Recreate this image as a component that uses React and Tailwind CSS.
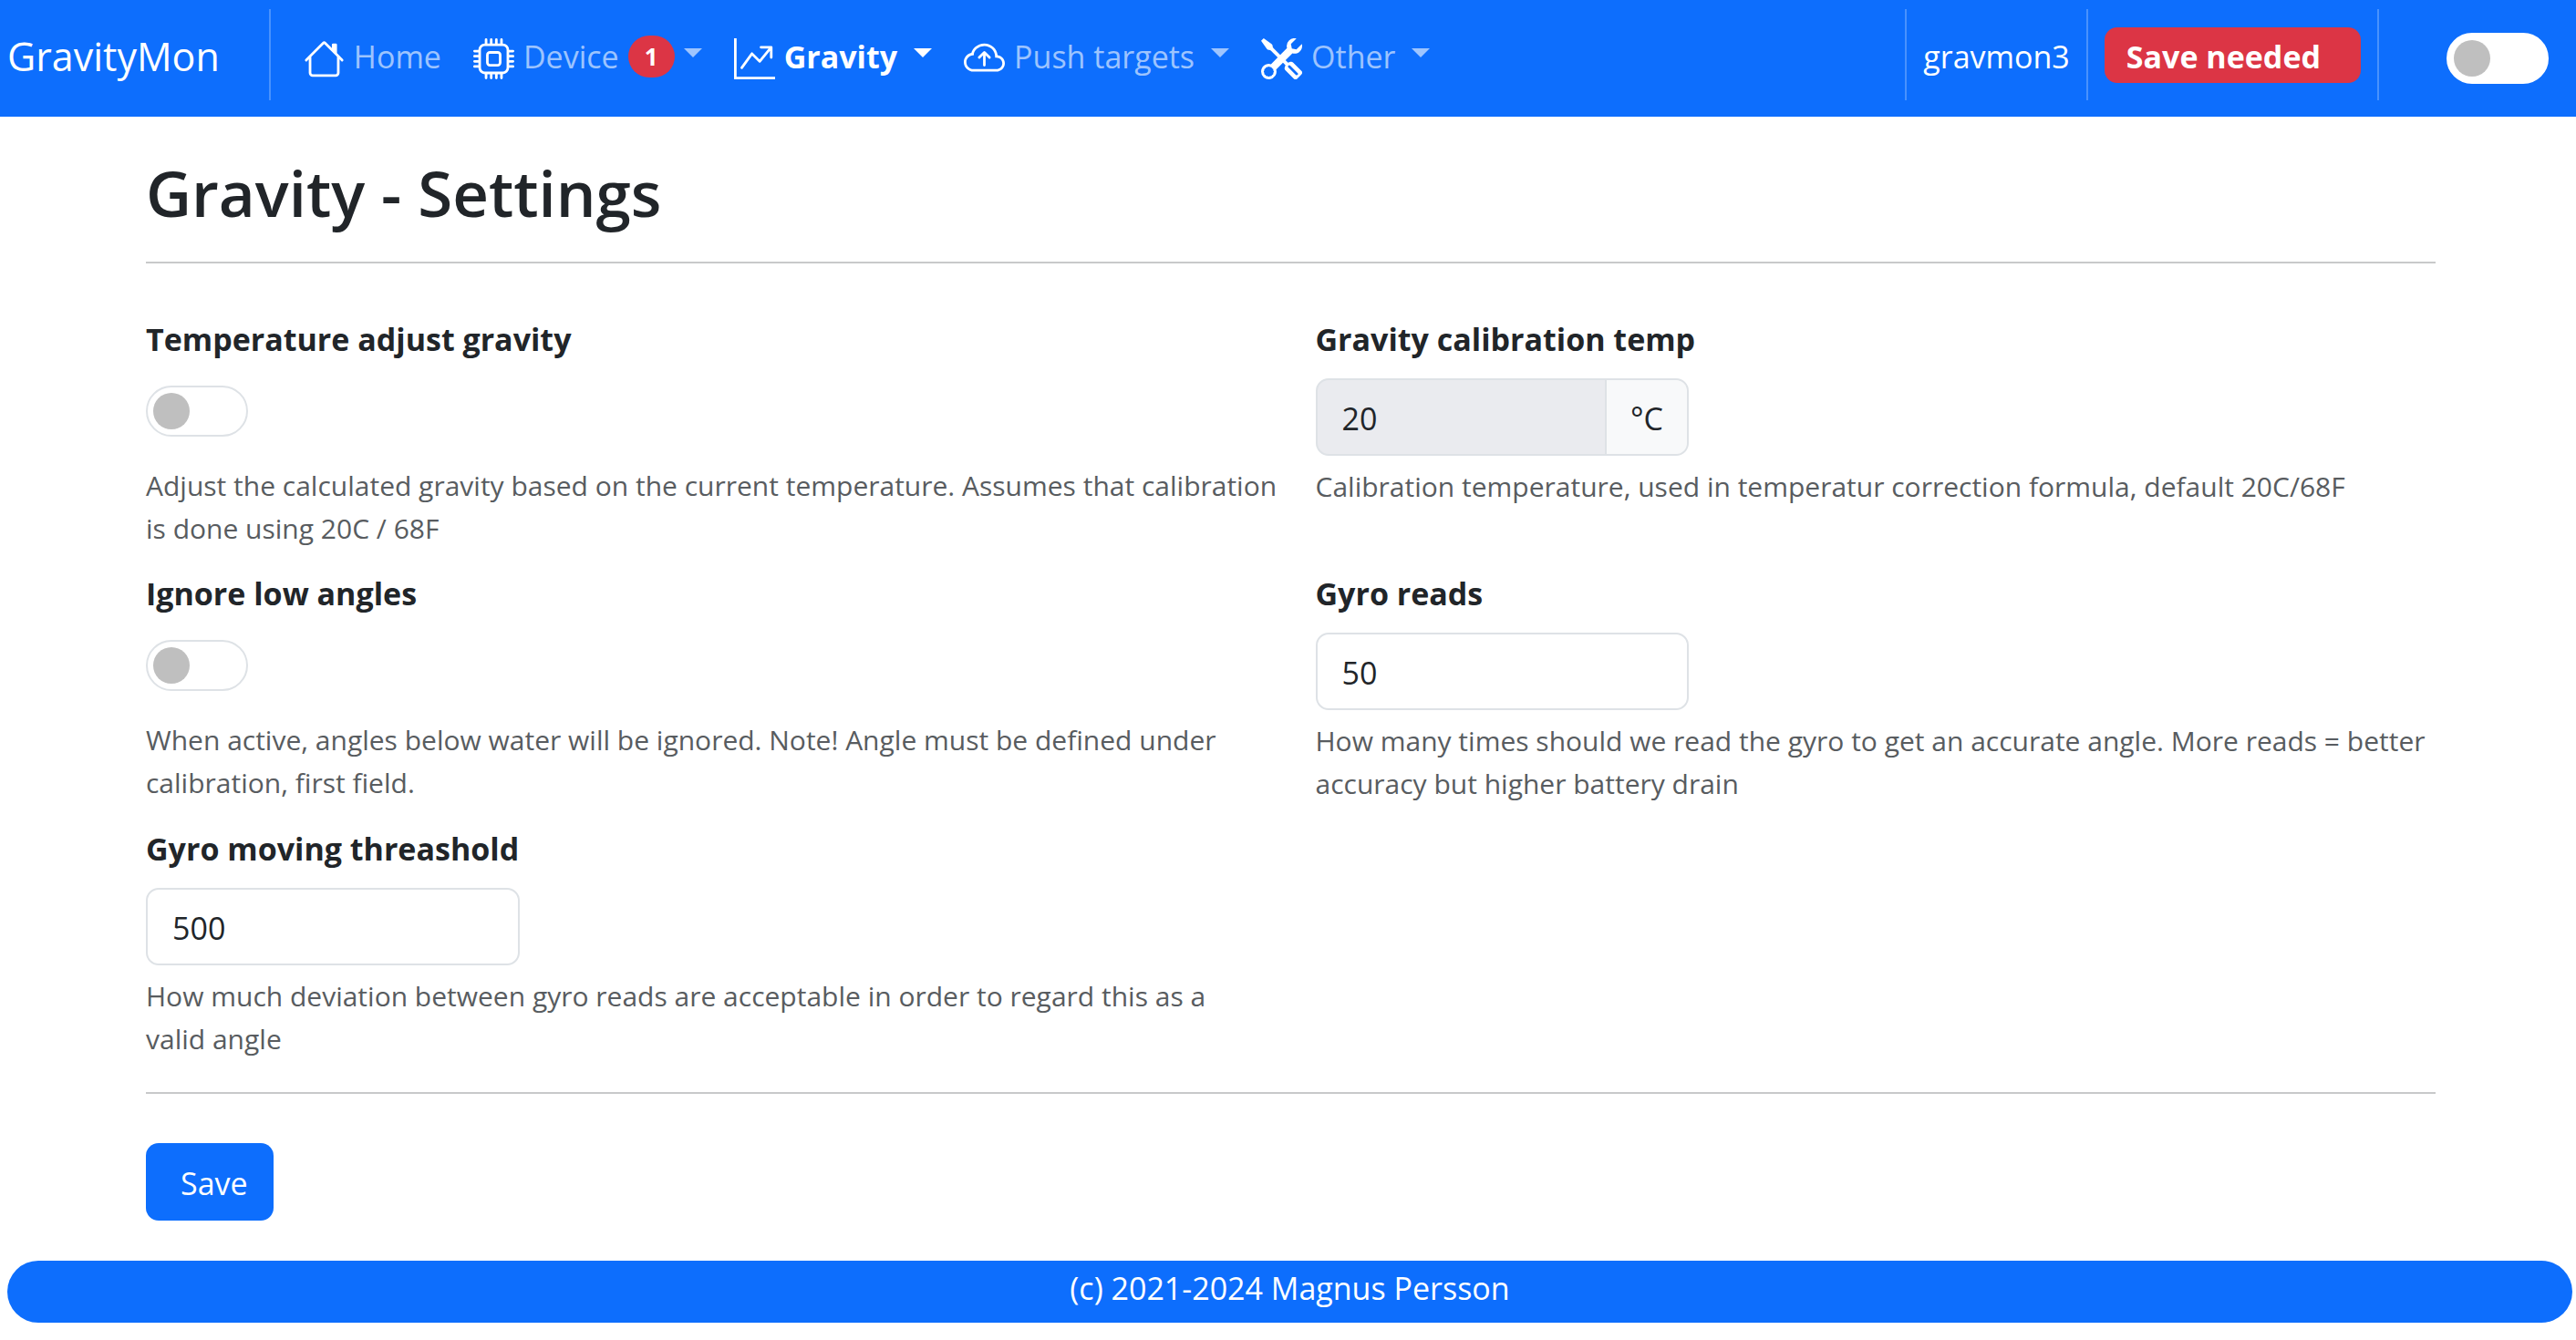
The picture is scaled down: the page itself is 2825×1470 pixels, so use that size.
import { useId } from "react";
import { BsHouse, BsCpu, BsGraphUpArrow, BsCloudArrowUp, BsTools } from "react-icons/bs";

function Switch({ id, label, light = false }) {
  return (
    <span className="relative block h-14 w-28">
      <input
        id={id}
        type="checkbox"
        role="switch"
        aria-label={label}
        className={`block h-14 w-28 appearance-none rounded-full border-2 bg-white ${light ? "border-white" : "border-[#dee2e6]"}`}
      />
      <span className="pointer-events-none absolute top-2 left-2 size-10 rounded-full bg-[#bfbfbf]" />
    </span>
  );
}

function Caret({ spaced = false }) {
  return (
    <span className={`mb-2 h-0 w-0 border-x-10 border-t-10 border-x-transparent border-t-current ${spaced ? "ml-2" : ""}`} />
  );
}

function NavButton({ icon: Icon, children, active = false }) {
  return (
    <button type="button" className={`flex items-center gap-[10px] ${active ? "font-bold text-white" : "text-white/60"}`}>
      <Icon className="mt-1 size-[45px] text-white" aria-hidden="true" />
      {children}
    </button>
  );
}

function Divider() {
  return <div className="h-[100px] w-[2px] bg-white/25" />;
}

function Field({ label, help, wideHelp = false, children }) {
  const id = useId();
  return (
    <div>
      <label htmlFor={id} className="block pb-4 leading-[54px] font-bold">{label}</label>
      {children(id)}
      <p className={`text-[30px] leading-[47px] text-[#585c60] ${wideHelp ? "-mr-4" : ""}`}>{help}</p>
    </div>
  );
}

function SwitchField(props) {
  return (
    <Field {...props} wideHelp>
      {(id) => (
        <div className="pt-2 pb-[30px]">
          <Switch id={id} />
        </div>
      )}
    </Field>
  );
}

function NumberField({ value, unit, disabled, ...props }) {
  return (
    <Field {...props}>
      {(id) => (
        <div className="pb-[10px]">
          <div className={`flex h-[85px] w-1/3 overflow-hidden rounded-[14px] border-2 border-[#dee2e6] ${disabled ? "bg-[#eaebef]" : "bg-white"}`}>
            <input id={id} type="text" defaultValue={value} disabled={disabled} className="min-w-0 flex-1 px-[27px] pt-[3px]" />
            {unit && (
              <span className="flex items-center border-l-2 border-[#dee2e6] bg-[#f8f9fa] px-[26px] pt-[3px]">{unit}</span>
            )}
          </div>
        </div>
      )}
    </Field>
  );
}

export default function App() {
  return (
    <div className="min-h-screen bg-white font-['Open_Sans',sans-serif] text-[34px] text-[#212529]">
      <nav className="flex h-32 items-center bg-[#0d6efd] pr-[30px] pb-2 pl-2 text-white">
        <a href="#brand" className="pt-1 pr-[54px] text-[43px]">GravityMon</a>
        <Divider />
        <div className="flex flex-1 items-center gap-[35px] pt-1 pl-9">
          <a href="#home" className="flex items-center gap-[10px] text-white/60">
            <BsHouse className="mt-1 size-[45px] text-white" aria-hidden="true" />
            Home
          </a>
          <NavButton icon={BsCpu}>
            Device
            <span className="flex h-[46px] w-[51px] items-center justify-center rounded-full bg-[#dc3545] text-[26px] font-bold text-white">1</span>
            <Caret />
          </NavButton>
          <NavButton icon={BsGraphUpArrow} active>Gravity <Caret spaced /></NavButton>
          <NavButton icon={BsCloudArrowUp}>Push targets <Caret spaced /></NavButton>
          <NavButton icon={BsTools}>Other <Caret spaced /></NavButton>
        </div>
        <Divider />
        <span className="px-[18px] pt-1">gravmon3</span>
        <Divider />
        <div className="px-[18px]">
          <button type="button" className="h-[61px] rounded-[14px] bg-[#dc3545] pt-1 pr-11 pl-6 font-bold">Save needed</button>
        </div>
        <Divider />
        <div className="pt-2 pl-[74px]">
          <Switch id="dark" label="Dark mode" light />
        </div>
      </nav>

      <main className="pr-[154px] pl-40">
        <h1 className="pt-10 text-[69px] leading-[86px] font-semibold">Gravity - Settings</h1>
        <hr className="mt-[33px] border-t-2 border-[#c8c9ca]" />
        <form>
          <div className="grid grid-cols-2 gap-x-[54px] gap-y-[21px] pt-14">
            <SwitchField
              label="Temperature adjust gravity"
              help="Adjust the calculated gravity based on the current temperature. Assumes that calibration is done using 20C / 68F"
            />
            <NumberField
              label="Gravity calibration temp"
              value="20"
              unit="°C"
              disabled
              help="Calibration temperature, used in temperatur correction formula, default 20C/68F"
            />
            <SwitchField
              label="Ignore low angles"
              help="When active, angles below water will be ignored. Note! Angle must be defined under calibration, first field."
            />
            <NumberField
              label="Gyro reads"
              value="50"
              help="How many times should we read the gyro to get an accurate angle. More reads = better accuracy but higher battery drain"
            />
            <NumberField
              label="Gyro moving threashold"
              value="500"
              help="How much deviation between gyro reads are acceptable in order to regard this as a valid angle"
            />
          </div>
          <hr className="mt-[35px] border-t-2 border-[#c8c9ca]" />
          <button type="submit" className="mt-[54px] block h-[85px] rounded-[14px] bg-[#0d6efd] pt-1 pr-7 pl-[38px] text-white">Save</button>
        </form>
      </main>

      <footer className="mt-11 mr-1 ml-2 h-[68px] rounded-full bg-[#0d6efd] text-center leading-[60px] text-white">
        (c) 2021-2024 Magnus Persson
      </footer>
    </div>
  );
}
